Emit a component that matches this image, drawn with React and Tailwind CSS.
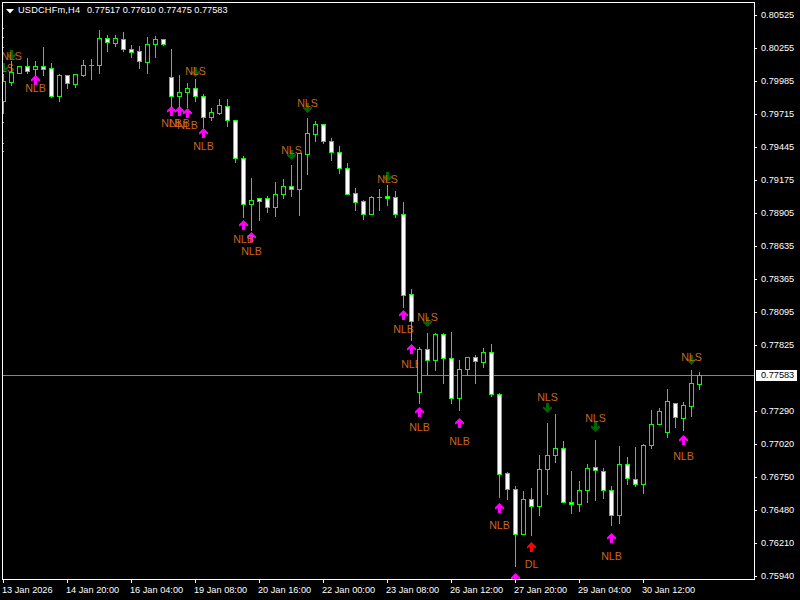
import React from 'react';

// [high, low, top, bottom, white]
const candles = [
    [74,113,81,101,0],[61,85,72,82,0],[66,73,66,73,0],[58,73,66,71,1],[61,75,66,69,0],[47,75,66,69,1],
    [63,97,68,96,1],[74,101,75,96,0],[75,88,75,83,1],[74,87,74,84,0],[60,76,65,75,0],[59,79,65,65,0],
    [30,73,38,65,0],[35,51,38,42,1],[35,46,38,43,0],[32,51,39,49,1],[45,57,49,52,1],[46,68,51,61,1],
    [37,73,44,62,0],[36,57,39,44,0],[39,45,39,44,1],[49,107,77,96,1],[75,107,92,96,0],[83,107,88,92,0],
    [79,101,88,96,1],[94,127,96,117,1],[108,120,112,117,0],[99,114,105,113,0],[99,126,106,120,1],[120,162,120,158,1],
    [156,217,158,204,1],[178,230,200,204,0],[198,220,198,201,1],[196,212,198,207,1],[182,216,194,207,0],[179,198,186,194,0],
    [165,196,186,189,1],[153,215,153,189,0],[118,174,133,154,0],[121,141,124,134,0],[124,143,124,141,1],[138,160,141,152,1],
    [146,173,152,168,1],[163,194,168,194,1],[188,210,193,202,1],[200,219,201,214,1],[196,214,197,214,0],[189,210,197,197,0],
    [185,205,196,198,1],[191,217,197,214,1],[202,307,214,295,1],[289,340,294,321,1],[347,403,349,392,0],[333,374,349,360,1],
    [333,370,334,360,0],[333,383,334,358,1],[332,403,358,398,1],[360,410,369,398,0],[357,375,357,369,0],[355,383,357,361,1],
    [348,367,352,362,0],[344,396,352,394,1],[393,497,394,474,1],[472,499,473,489,1],[486,566,489,534,1],[491,534,499,534,0],
    [488,535,499,506,1],[455,515,469,506,0],[423,494,455,469,0],[414,462,448,455,0],[441,502,448,502,1],[471,513,502,504,1],
    [481,511,490,504,0],[464,502,468,490,0],[440,500,467,470,1],[468,498,471,490,1],[486,525,490,515,1],[446,523,464,515,0],
    [457,484,464,478,1],[447,486,479,484,1],[444,493,445,484,0],[410,448,424,445,0],[408,424,411,424,0],[389,437,401,432,0],
    [403,427,403,417,1],[402,430,405,418,0],[370,416,383,406,0],[372,389,375,384,0],
];

const upArrows = [
    [35,75],[171,106],[179,106],[187,108],[203,128],[243,220],[251,232],[403,310],
    [411,344],[419,407],[459,418],[499,503],[515,573],[611,533],[683,435],
];
const downArrows = [[3,73],[11,60],[195,77],[291,160],[307,113],[387,182],[427,327],[547,413],[595,432],[691,365]];

const labels = [
    ['NLS',3,72],['NLS',11,60],['NLB',35,92],['NLB',171,127],['NLB',179,127],['NLB',187,129],['NLS',195,75],
    ['NLB',203,150],['NLB',243,243],['NLB',251,255],['NLS',291,154],['NLS',307,107],['NLS',387,183],['NLB',403,333],
    ['NLB',411,368],['NLS',427,321],['NLB',419,431],['NLB',459,445],['NLB',499,529],['DL',531,568],['NLS',547,401],
    ['NLS',595,422],['NLB',611,560],['NLB',683,460],['NLS',691,361],
];

const edgeDots = [28, 37, 47, 63, 122, 143, 151];

const prices = [
    '0.80525','0.80255','0.79985','0.79715','0.79445','0.79175','0.78905','0.78635','0.78365',
    '0.78095','0.77825','','0.77290','0.77020','0.76750','0.76480','0.76210','0.75940',
];
const times = [
    '13 Jan 2026','14 Jan 20:00','16 Jan 04:00','19 Jan 08:00','20 Jan 16:00','22 Jan 00:00',
    '23 Jan 08:00','26 Jan 12:00','27 Jan 20:00','29 Jan 04:00','30 Jan 12:00',
];

const arrowUp = (x, y) => {
    const c = x + 0.5;
    return `${c},${y} ${c + 4.5},${y + 4.5} ${c + 4.5},${y + 6.5} ${c + 1.5},${y + 5} ${c + 1.5},${y + 10} ${c - 1.5},${y + 10} ${c - 1.5},${y + 5} ${c - 4.5},${y + 6.5} ${c - 4.5},${y + 4.5}`;
};
const arrowDown = (x, y) => {
    const c = x + 0.5;
    return `${c},${y} ${c + 4.5},${y - 4.5} ${c + 4.5},${y - 6.5} ${c + 1.5},${y - 5} ${c + 1.5},${y - 10} ${c - 1.5},${y - 10} ${c - 1.5},${y - 5} ${c - 4.5},${y - 6.5} ${c - 4.5},${y - 4.5}`;
};

const Candle = ({ data, index }) => {
    const [high, low, top, bottom, white] = data;
    const x = 3 + index * 8;
    const height = bottom - top + 1;
    return (
        <g>
            <rect x={x} y={high} width="1" height={low - high + 1} fill="#00ff00" />
            <rect x={x - 2} y={top} width="5" height={height} fill="#00ff00" />
            {height > 2 && (
                <rect x={x - 1} y={top + 1} width="3" height={height - 2} fill={white ? '#ffffff' : '#000000'} />
            )}
        </g>
    );
};

const Chart = () => (
    <svg viewBox="3 3 751 576" className="block w-[751px] h-[576px]">
        <rect x="3" y="375" width="751" height="1" fill="#778899" shapeRendering="crispEdges" />
        {edgeDots.map(y => (
            <rect key={y} x="3" y={y} width="1" height="1" fill="#d8a838" />
        ))}
        {upArrows.map(([x, y]) => (
            <polygon key={x} points={arrowUp(x, y)} fill="#ff00ff" />
        ))}
        <polygon points={arrowUp(531, 542)} fill="#ff0000" />
        {downArrows.map(([x, y]) => (
            <polygon key={x} points={arrowDown(x, y)} fill="#006400" />
        ))}
        {labels.map(([text, x, y]) => (
            <text
                key={x}
                x={x + 0.5}
                y={y}
                textAnchor="middle"
                className="font-['Liberation_Sans',sans-serif] text-[10.67px] fill-[#c9651f]"
            >
                {text}
            </text>
        ))}
        <g shapeRendering="crispEdges">
            {candles.map((c, i) => (
                <Candle key={i} data={c} index={i} />
            ))}
        </g>
    </svg>
);

export default function App() {
    return (
        <div className="relative flex w-[800px] h-[600px] overflow-hidden bg-black text-white font-['Liberation_Sans',sans-serif] text-[9.2px] leading-none">
            <div className="flex flex-col pl-[2px] pt-[2px] w-[755px]">
                <div className="relative w-[753px] h-[578px] border border-white">
                    <Chart />
                    <div className="absolute left-[3px] top-[2px] flex items-center h-[12px]">
                        <svg width="8" height="5" viewBox="0 0 8 5" className="mr-[4px]">
                            <polygon points="0,0 8,0 4,4.5" fill="#ffffff" />
                        </svg>
                        <span className="w-[69px] tracking-[0.2px]">USDCHFm,H4</span>
                        <span>0.77517 0.77610 0.77475 0.77583</span>
                    </div>
                </div>
                <div className="flex">
                    {times.map(t => (
                        <div key={t} className="w-[64px] shrink-0 pl-px">
                            <div className="w-px h-[3px] bg-white" />
                            <div className="-ml-px mt-[3px] whitespace-nowrap">{t}</div>
                        </div>
                    ))}
                </div>
            </div>
            <div className="flex flex-col -mt-px w-[45px]">
                {prices.map((p, i) => (
                    <div key={i} className="flex items-center shrink-0 h-[33px]">
                        <div className={p ? 'w-[2px] h-px bg-white' : 'w-[2px] h-px'} />
                        <span className="ml-[4px]">{p}</span>
                    </div>
                ))}
            </div>
            <div className="absolute left-[756px] top-[370px] flex items-center w-[41px] h-[11px] pl-[5px] bg-white text-black">
                0.77583
            </div>
        </div>
    );
}
